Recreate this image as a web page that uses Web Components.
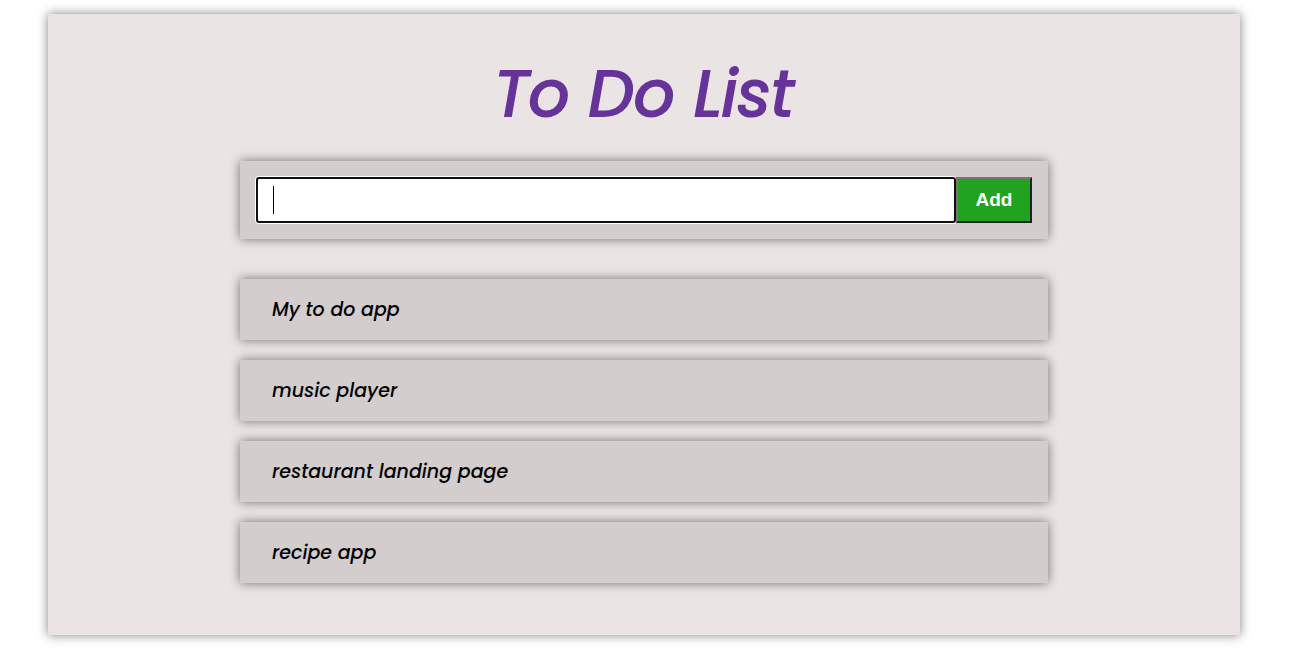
<!DOCTYPE html>
<html lang="en">
<head>
<meta charset="utf-8">
<meta name="viewport" content="width=device-width, initial-scale=1">
<title>To Do List</title>
<style>
  body { margin: 0; background: #fff; color: #000; font-family: Poppins, Inter, sans-serif; }
</style>
</head>
<body>
<todo-card>
  <span slot="title">To Do List</span>
  <todo-form></todo-form>
  <todo-list>
    <todo-item>My to do app</todo-item>
    <todo-item>music player</todo-item>
    <todo-item>restaurant landing page</todo-item>
    <todo-item>recipe app</todo-item>
  </todo-list>
</todo-card>
<script>
  const define = (name, html) => customElements.define(name, class extends HTMLElement {
    constructor() {
      super();
      this.attachShadow({ mode: 'open' }).innerHTML = html;
    }
  });

  define('todo-card', `
    <style>
      :host { display: block; margin: 14px 49px 16px 48px; padding: 32px 192px 52px; background: #eae4e4; box-shadow: 0 0 10px rgba(0,0,0,.5); }
      h1 { margin: 0 0 19px; font-size: 64px; line-height: 96px; font-weight: 400; font-style: italic; -webkit-text-stroke: 2px; text-align: center; color: #663399; }
    </style>
    <h1><slot name="title"></slot></h1>
    <slot></slot>`);

  define('todo-form', `
    <style>
      :host { display: block; padding: 16px; background: #d3cdcd; box-shadow: 0 0 10px rgba(0,0,0,.5); }
      form { display: flex; }
      input, button { box-sizing: border-box; height: 46px; margin: 0; }
      /* Focus ring with a text cursor at the start of the field. */
      input { flex: 1; min-width: 0; padding: 0 15px; border: 2px solid #101010; border-radius: 3px; outline: none; box-shadow: 0 0 0 1px #fff;
        background: linear-gradient(#000, #000) 15px center / 1px 28px no-repeat #fff; font: 19px Poppins, Inter, sans-serif; }
      button { width: 76px; padding: 0; border: 2px solid; border-color: #767676 #212121 #212121 #767676; background: #20a420; color: #fff; font: bold 19px "Liberation Sans", Arial, sans-serif; }
    </style>
    <form>
      <input type="text" aria-label="New task" autocomplete="off">
      <button type="button">Add</button>
    </form>`);

  define('todo-list', `
    <style>
      :host { display: flex; flex-direction: column; gap: 20px; margin-top: 40px; }
    </style>
    <slot></slot>`);

  define('todo-item', `
    <style>
      :host { display: block; padding: 16px 32px; background: #d3cdcd; box-shadow: 0 0 10px rgba(0,0,0,.5); font-size: 19px; line-height: 29px; font-weight: 500; font-style: italic; }
    </style>
    <slot></slot>`);
</script>
</body>
</html>
